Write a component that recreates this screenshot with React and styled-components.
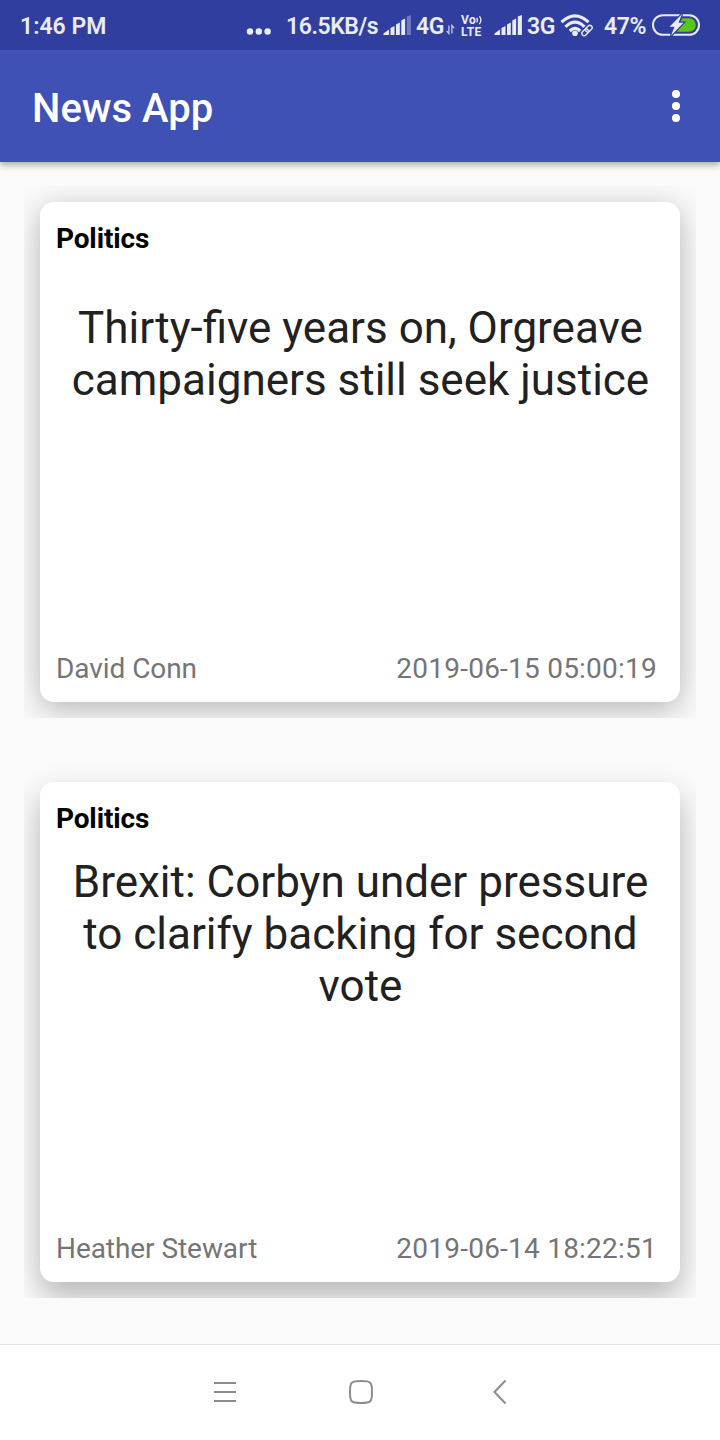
import React from 'react';
import styled, { createGlobalStyle } from 'styled-components';

const GlobalStyle = createGlobalStyle`
  * { box-sizing: border-box; }
  body { margin: 0; background: #fafafa; font-family: Roboto, sans-serif; }
`;

const Screen = styled.div`
  display: flex;
  flex-direction: column;
  width: 720px;
  height: 1440px;
  overflow: hidden;
  background: #fafafa;
`;

const StatusBar = styled.header`
  position: relative;
  z-index: 1;
  display: flex;
  align-items: center;
  flex: none;
  height: 50px;
  padding: 2px 20px 0 20px;
  background: #303f9f;
  color: #e9ebf7;
`;

const StatusText = styled.span`
  flex: none;
  width: ${(p) => p.$width}px;
  margin-left: ${(p) => p.$gap || 0}px;
  font-size: 23px;
  font-weight: 600;
  letter-spacing: ${(p) => p.$spacing || 0}px;
  line-height: 46px;
  padding-top: 2px;
  white-space: nowrap;
`;

const StatusIcon = styled.svg`
  flex: none;
  display: block;
  margin-top: -2px;
  margin-left: ${(p) => p.$gap || 0}px;
`;

const Volte = styled.span`
  display: flex;
  flex-direction: column;
  flex: none;
  width: 23px;
  margin-left: 6px;
  margin-top: -1px;
  font-size: 12px;
  font-weight: 700;
  letter-spacing: 0.5px;
  line-height: 12px;
`;

const VolteTop = styled.span`
  display: flex;
  align-items: center;
  height: 12px;
`;

const AppBar = styled.div`
  display: flex;
  align-items: center;
  justify-content: space-between;
  flex: none;
  height: 112px;
  padding: 5px 36px 0 32px;
  background: #3f51b5;
  color: #fff;
  box-shadow: 0 3px 6px rgba(0, 0, 0, 0.28), 0 2px 12px rgba(0, 0, 0, 0.06);
`;

const AppTitle = styled.h1`
  margin: 0;
  font-size: 40px;
  font-weight: 500;
  line-height: 48px;
`;

const MenuButton = styled.button`
  display: flex;
  padding: 0;
  margin-top: -5px;
  border: 0;
  background: none;
`;

const Feed = styled.main`
  display: flex;
  flex-direction: column;
  flex: 1;
  gap: 48px;
  padding: 24px 24px 0;
`;

const CardFrame = styled.div`
  flex: none;
  height: 532px;
  padding: 16px;
  overflow: hidden;
`;

const Card = styled.article`
  display: flex;
  flex-direction: column;
  justify-content: space-between;
  height: 500px;
  padding: 20px 24px 17px 16px;
  border-radius: 14px;
  background: #fff;
  box-shadow: 0 ${(p) => p.$drop}px 31px rgba(0, 0, 0, 0.28);
`;

const Section = styled.div`
  color: #000;
  font-size: 28px;
  font-weight: 700;
  letter-spacing: -0.15px;
  line-height: 33px;
`;

const Headline = styled.h2`
  margin: ${(p) => p.$top}px -9px auto 0;
  color: #212121;
  font-size: 44px;
  font-weight: 400;
  line-height: 52px;
  text-align: center;
  white-space: pre-line;
`;

const Meta = styled.div`
  display: flex;
  justify-content: space-between;
  color: #757575;
  font-size: 28px;
  line-height: 33px;
`;

const Author = styled.span`
  letter-spacing: -0.06px;
`;

const Timestamp = styled.time`
  margin-right: -1px;
  letter-spacing: 0.23px;
`;

const NavBar = styled.nav`
  display: flex;
  align-items: center;
  justify-content: center;
  flex: none;
  gap: 110px;
  height: 96px;
  padding: 0 0 2px 2px;
  border-top: 1px solid #e3e3e3;
  background: #fff;
`;

const NavIcon = styled.svg`
  display: block;
  fill: none;
  stroke: #8c8c8c;
  stroke-width: 2;
`;

const Signal = ({ weak, gap = 4 }) => (
  <StatusIcon $gap={gap} width="29" height="20" viewBox="0 0 29 20" fill="#e9ebf7">
    <path d="M0.5 20v-1.500L6 14.500V20Z" />
    <path d="M7.500 13l4-2v9h-4z" />
    <path d="M13 9.500l3.800-2V20H13z" />
    <path d="M18.300 5.500l3.800-2V20h-3.800z" />
    <path d="M23.800 1.500L27.900 0v20h-4.100z" opacity={weak ? 0.35 : 1} />
  </StatusIcon>
);

const articles = [
  {
    section: 'Politics',
    headline: 'Thirty-five years on, Orgreave\ncampaigners still seek justice',
    author: 'David Conn',
    date: '2019-06-15 05:00:19',
    top: 47,
    drop: 7,
  },
  {
    section: 'Politics',
    headline: 'Brexit: Corbyn under pressure\nto clarify backing for second\nvote',
    author: 'Heather Stewart',
    date: '2019-06-14 18:22:51',
    top: 21,
    drop: 14,
  },
];

export default function App() {
  return (
    <Screen>
      <GlobalStyle />
      <StatusBar>
        <StatusText $width={226}>1:46 PM</StatusText>
        <StatusIcon width="26" height="24" viewBox="0 0 26 24" fill="#e9ebf7">
          <circle cx="4" cy="18.500" r="3.200" />
          <circle cx="12.800" cy="18.500" r="3.200" />
          <circle cx="21.600" cy="18.500" r="3.200" />
        </StatusIcon>
        <StatusText $width={93} $gap={14} $spacing={-0.45}>16.5KB/s</StatusText>
        <Signal weak />
        <StatusText $width={28} $gap={4} $spacing={-0.4}>4G</StatusText>
        <StatusIcon $gap={2} width="9" height="22" viewBox="0 0 9 22" fill="none" stroke="#c4c9e8" strokeWidth="1.3">
          <path d="M2.900 11.500v8L.7 17M5.900 19.500v-8l2.200 2.500" />
        </StatusIcon>
        <Volte>
          <VolteTop>
            Vo
            <svg width="7" height="10" viewBox="0 0 7 10" fill="none" stroke="#e9ebf7" strokeWidth="1.3">
              <path d="M.6 3q1.600 2.200 0 4.400M3.400 1.200q3 4 0 8" />
            </svg>
          </VolteTop>
          <span>LTE</span>
        </Volte>
        <Signal gap={10} />
        <StatusText $width={28} $gap={4} $spacing={-0.4}>3G</StatusText>
        <StatusIcon $gap={5} width="34" height="24" viewBox="0 0 34 24" fill="none" stroke="#e9ebf7" strokeWidth="3.200">
          <path d="M1.500 9.200Q15 -3.400 28.500 9.200M5.500 13.800Q15 4.500 24.500 13.800M9.800 18Q15 12.800 20.200 18" />
          <circle cx="15" cy="20.300" r="2.800" fill="#e9ebf7" stroke="none" />
          <g transform="rotate(-45 27 17.500)">
            <path d="M20.500 17.500h13" stroke="#303f9f" strokeWidth="6" />
            <g strokeWidth="1.400">
              <rect x="20.700" y="15.200" width="7.500" height="4.600" rx="2.300" />
              <rect x="25.800" y="15.200" width="7.500" height="4.600" rx="2.300" />
            </g>
          </g>
        </StatusIcon>
        <StatusText $width={45} $gap={10} $spacing={-0.4}>47%</StatusText>
        <StatusIcon $gap={3} width="48" height="22" viewBox="0 0 48 22">
          <rect x="1" y="1.200" width="46" height="19.600" rx="9.800" fill="none" stroke="#e9ebf7" strokeWidth="2" />
          <path d="M30 4.200H37a6.800 6.800 0 0 1 0 13.600H25z" fill="#58c814" />
          <path d="M30 0L17.500 12.800H22.500L19 21.800L31.500 8.800H26.500Z" fill="#e9ebf7" stroke="#303f9f" strokeWidth="2.400" paintOrder="stroke" />
        </StatusIcon>
      </StatusBar>
      <AppBar>
        <AppTitle>News App</AppTitle>
        <MenuButton aria-label="More options">
          <svg width="16" height="32" viewBox="0 0 16 32" fill="#fff">
            <circle cx="8" cy="4" r="4" />
            <circle cx="8" cy="16" r="4" />
            <circle cx="8" cy="28" r="4" />
          </svg>
        </MenuButton>
      </AppBar>
      <Feed>
        {articles.map((a) => (
          <CardFrame key={a.date}>
            <Card $drop={a.drop}>
              <Section>{a.section}</Section>
              <Headline $top={a.top}>{a.headline}</Headline>
              <Meta>
                <Author>{a.author}</Author>
                <Timestamp>{a.date}</Timestamp>
              </Meta>
            </Card>
          </CardFrame>
        ))}
      </Feed>
      <NavBar>
        <NavIcon width="26" height="26" viewBox="0 0 26 26">
          <path d="M2 4h22M2 13h22M2 22h22" />
        </NavIcon>
        <NavIcon width="26" height="26" viewBox="0 0 26 26">
          <path d="M13 2C23 2 24 3 24 13S23 24 13 24 2 23 2 13 3 2 13 2Z" />
        </NavIcon>
        <NavIcon width="26" height="26" viewBox="0 0 26 26">
          <path d="M21.500 1.500L10.500 13L21.500 24.500" />
        </NavIcon>
      </NavBar>
    </Screen>
  );
}
